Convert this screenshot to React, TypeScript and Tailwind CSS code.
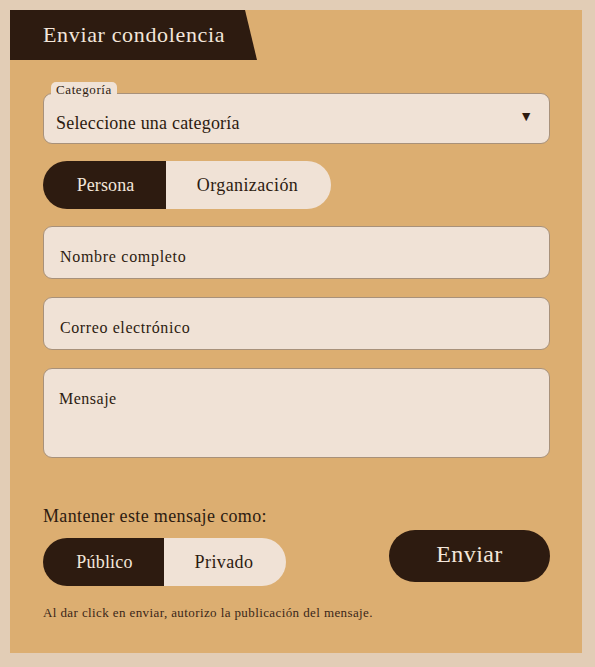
import React from "react";

const font = { fontFamily: '"Liberation Serif", "DejaVu Serif", serif' };

export default function App() {
  return (
    <div className="min-h-[667px] w-[595px] bg-[#e2cdb6] p-[10px] pr-[13px] pb-[14px]" style={font}>
      <div className="flex h-[643px] w-[572px] flex-col bg-[#dcae71]">
        <div className="flex h-[50px] w-[247px] items-center bg-[#2d1b10] pl-[33px] [clip-path:polygon(0_0,235px_0,100%_100%,0_100%)]">
          <span className="text-[22px] leading-none tracking-[0.65px] text-[#f3e6da]">Enviar condolencia</span>
        </div>
        <div className="flex flex-col px-[33px] pr-[32px]">
          <div className="relative mt-[33px] h-[51px] rounded-[9px] border border-[#a8917a] bg-[#f0e2d6]">
            <span className="absolute left-[7px] top-[-12px] rounded-t-[5px] bg-[#f0e2d6] px-[5px] pt-[1px] text-[13px] leading-[13px] tracking-[0.6px] text-[#2d1b10]">
              Categoría
            </span>
            <div className="flex h-full items-center justify-between pl-[12px] pr-[16px] pt-[10px]">
              <span className="text-[18px] tracking-[0.2px] text-[#2d1b10]">Seleccione una categoría</span>
              <span className="mt-[-14px] text-[14px] text-[#2d1b10]">▼</span>
            </div>
          </div>
          <div className="mt-[17px] flex h-[48px] w-[288px] overflow-hidden rounded-full">
            <div className="flex w-[123px] items-center justify-center bg-[#2d1b10] pl-[2px] text-[18px] tracking-[0.1px] text-[#f3e6da]">Persona</div>
            <div className="flex flex-1 items-center justify-center bg-[#f0e2d6] pr-[2px] text-[18px] tracking-[0.4px] text-[#2d1b10]">Organización</div>
          </div>
          <div className="mt-[17px] flex h-[53px] items-center rounded-[9px] border border-[#a8917a] bg-[#f0e2d6] pl-[16px] pt-[8px] text-[16px] tracking-[0.7px] text-[#2d1b10]">
            Nombre completo
          </div>
          <div className="mt-[18px] flex h-[53px] items-center rounded-[9px] border border-[#a8917a] bg-[#f0e2d6] pl-[16px] pt-[8px] text-[16px] tracking-[0.6px] text-[#2d1b10]">
            Correo electrónico
          </div>
          <div className="mt-[18px] h-[90px] rounded-[9px] border border-[#a8917a] bg-[#f0e2d6] pl-[15px] pt-[20px] text-[16px] leading-[20px] tracking-[0.5px] text-[#2d1b10]">
            Mensaje
          </div>
          <div className="mt-[46px] text-[18px] leading-[24px] tracking-[0.35px] text-[#2d1b10]">Mantener este mensaje como:</div>
          <div className="mt-[10px] flex items-start justify-between">
            <div className="flex h-[48px] w-[243px] overflow-hidden rounded-full">
              <div className="flex w-[121px] items-center justify-center bg-[#2d1b10] pl-[2px] text-[18px] tracking-[0.2px] text-[#f3e6da]">Público</div>
              <div className="flex flex-1 items-center justify-center bg-[#f0e2d6] pr-[2px] text-[18px] tracking-[0.4px] text-[#2d1b10]">Privado</div>
            </div>
            <div className="mt-[-8px] flex h-[52px] w-[161px] items-center justify-center rounded-[26px] bg-[#2d1b10] pb-[4px] text-[24px] tracking-[0.4px] text-[#f3e6da]">
              Enviar
            </div>
          </div>
          <div className="mt-[19px] text-[13px] leading-[16px] tracking-[0.4px] text-[#3a2618]">
            Al dar click en enviar, autorizo la publicación del mensaje.
          </div>
        </div>
      </div>
    </div>
  );
}
